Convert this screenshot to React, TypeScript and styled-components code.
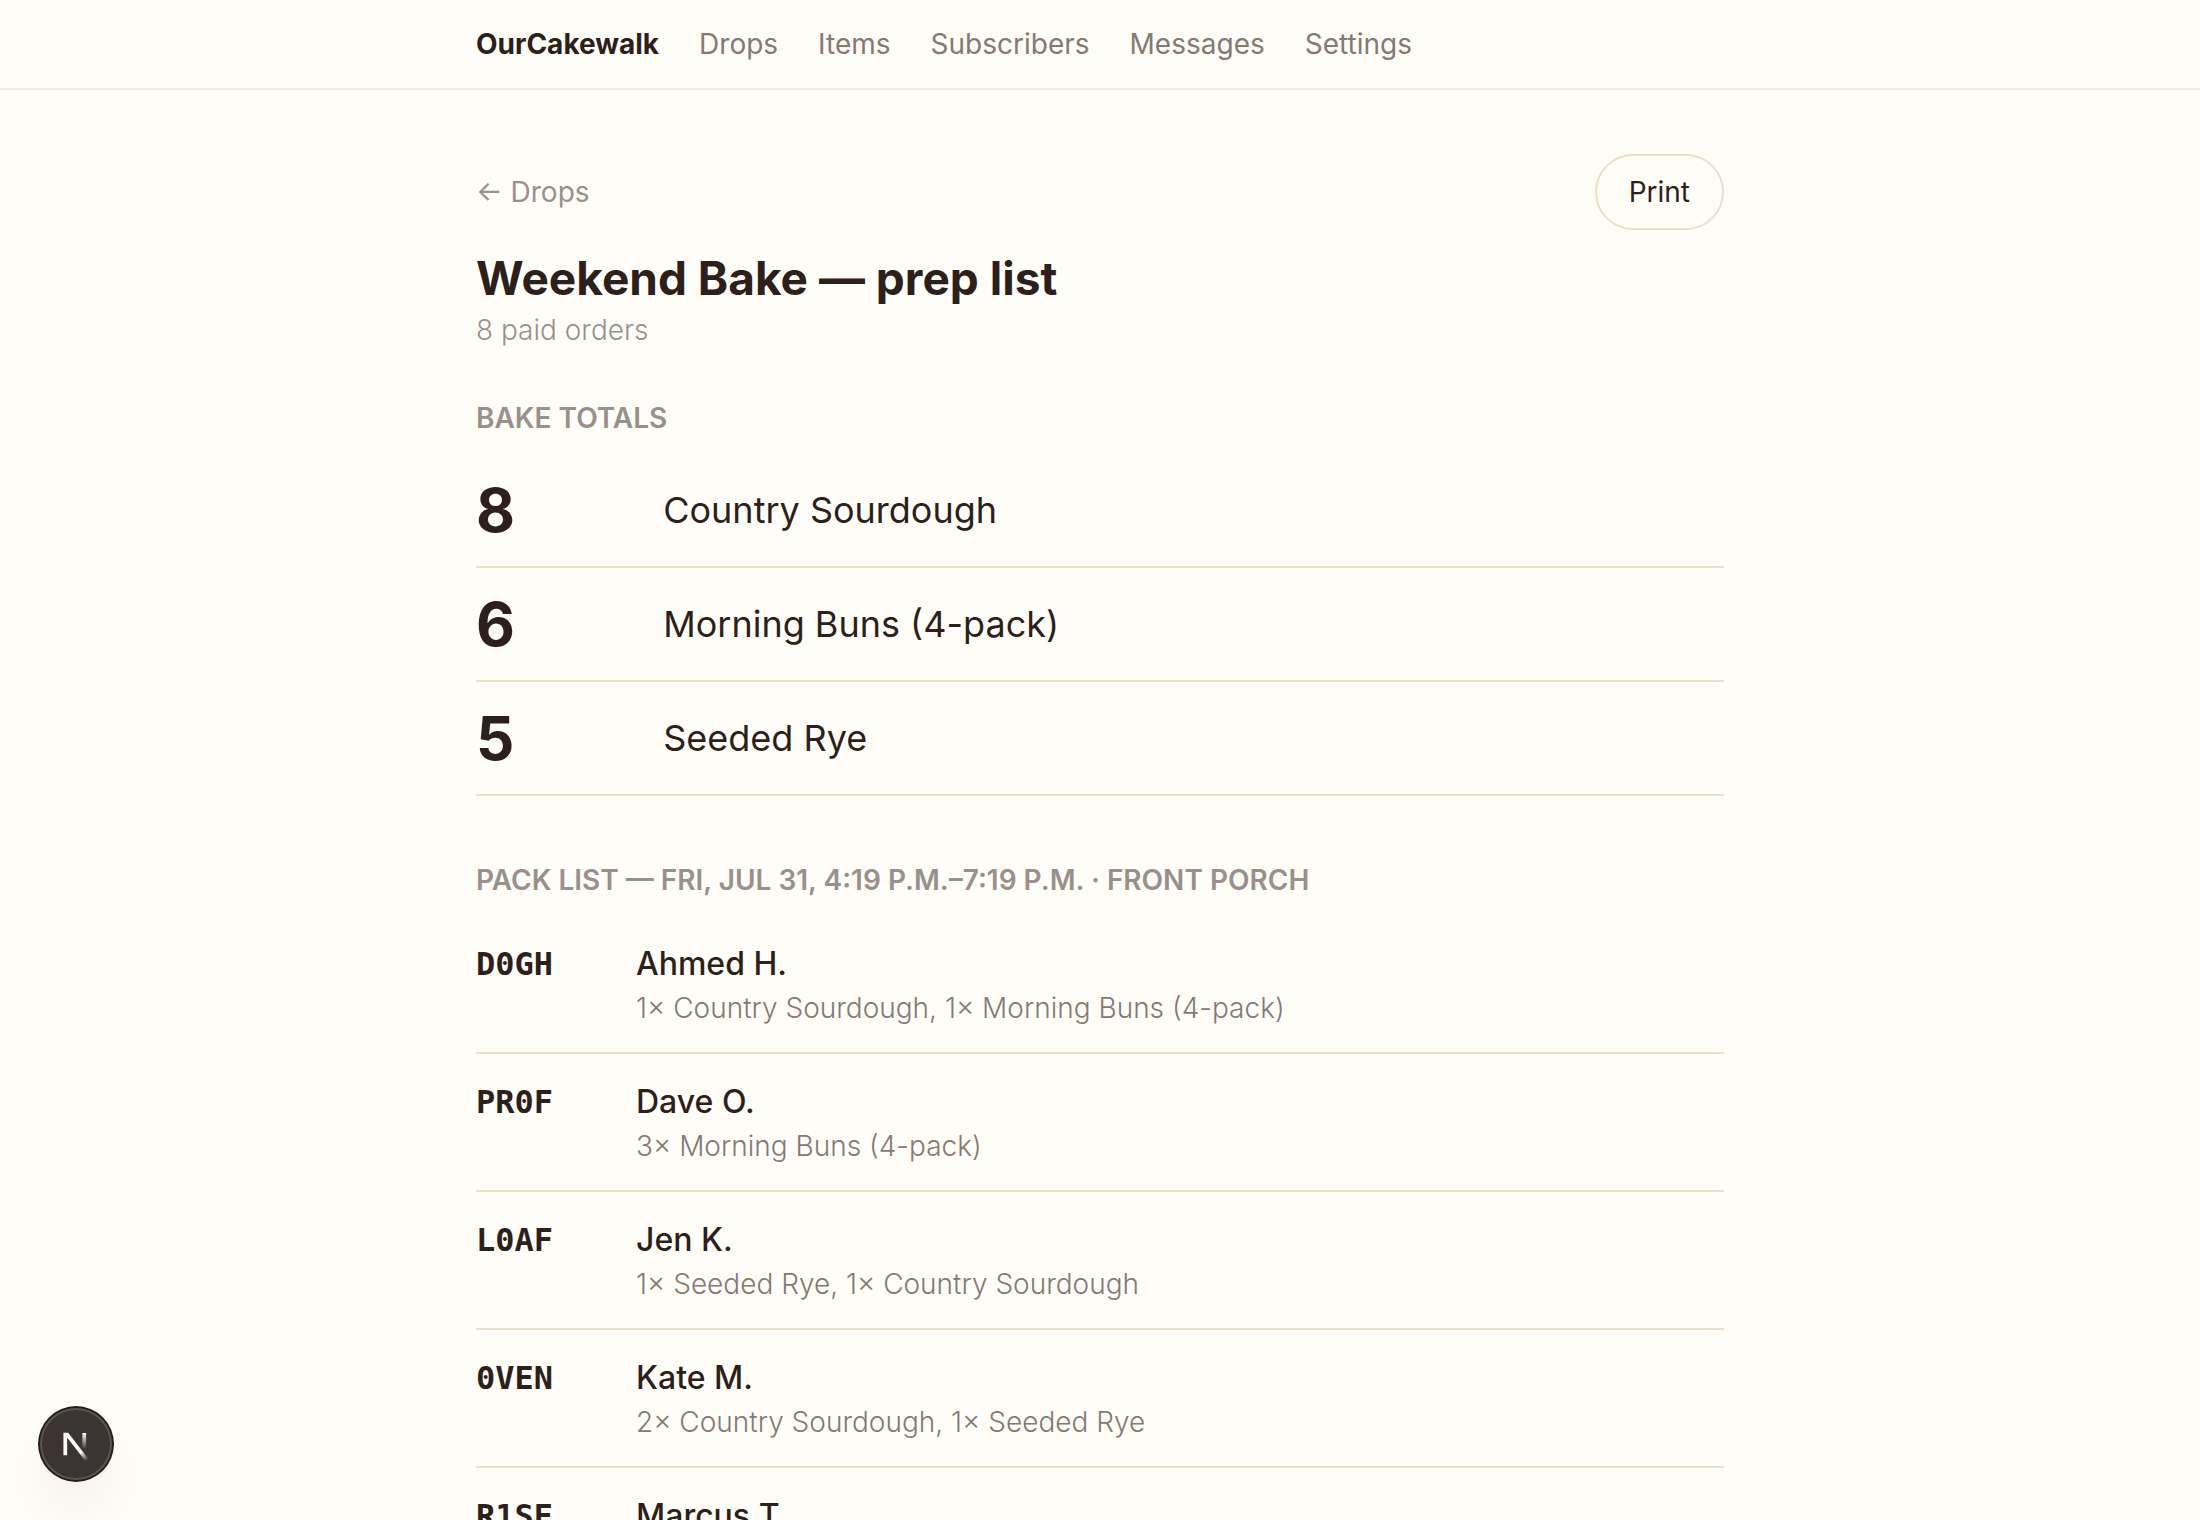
import React from "react";
import styled, { createGlobalStyle } from "styled-components";

const color = {
  paper: "#fffdf8",
  ink: "#2d1f1a",
  muted: "#857973",
  faint: "#9a908b",
  line: "#ebdfcb",
  softLine: "#f1ebe3",
};

const GlobalStyle = createGlobalStyle`
  *, *::before, *::after { box-sizing: border-box; }
  body {
    margin: 0;
    background: ${color.paper};
    color: ${color.ink};
    font-family: Inter, "Liberation Sans", sans-serif;
    font-size: 28px;
    line-height: 40px;
    -webkit-font-smoothing: antialiased;
  }
`;

const Header = styled.header`
  border-bottom: 2px solid ${color.softLine};
`;

const Nav = styled.nav`
  display: flex;
  align-items: center;
  gap: 40px;
  max-width: 1344px;
  margin: 0 auto;
  padding: 24px 48px;
`;

const Brand = styled.a`
  color: ${color.ink};
  font-weight: 700;
  text-decoration: none;
`;

const NavLink = styled.a`
  color: ${color.muted};
  font-weight: 400;
  text-decoration: none;
`;

const Main = styled.main`
  max-width: 1344px;
  margin: 0 auto;
  padding: 64px 48px 0;
`;

const Toolbar = styled.div`
  display: flex;
  align-items: center;
  justify-content: space-between;
  margin-bottom: 16px;
`;

const BackLink = styled.a`
  color: ${color.faint};
  font-weight: 400;
  text-decoration: none;
`;

const PrintButton = styled.button`
  padding: 16px 32px;
  border: 2px solid ${color.line};
  border-radius: 40px;
  background: transparent;
  color: ${color.ink};
  font: inherit;
  cursor: pointer;
`;

const Title = styled.h1`
  margin: 0;
  font-size: 46px;
  line-height: 64px;
  font-weight: 700;
`;

const Subtitle = styled.p`
  margin: 0;
  color: ${color.faint};
  font-weight: 300;
`;

const Section = styled.section<{ $gap: number }>`
  margin-top: ${(p) => p.$gap}px;
`;

const SectionTitle = styled.h2`
  margin: 0 0 16px;
  color: ${color.faint};
  font-size: 28px;
  line-height: 40px;
  font-weight: 600;
  text-transform: uppercase;
`;

const Table = styled.table`
  width: 100%;
  border-collapse: separate;
  border-spacing: 0;
  table-layout: fixed;
`;

const Cell = styled.td`
  padding: 20px 0;
  border-bottom: 2px solid ${color.line};
  font-size: 36px;
  line-height: 56px;
  vertical-align: middle;
`;

const CountCell = styled.th`
  width: 15%;
  padding: 20px 0;
  border-bottom: 2px solid ${color.line};
  font-size: 60px;
  line-height: 72px;
  font-weight: 700;
  text-align: left;
`;

const List = styled.ul`
  margin: 0;
  padding: 0;
  list-style: none;
`;

const Order = styled.li`
  display: grid;
  grid-template-columns: 160px 1fr;
  padding: 24px 0;
  border-bottom: 2px solid ${color.line};
`;

const Code = styled.span`
  font-family: "DejaVu Sans Mono", monospace;
  font-size: 32px;
  line-height: 48px;
  font-weight: 700;
`;

const Customer = styled.div`
  font-size: 32px;
  line-height: 48px;
  font-weight: 500;
`;

const Lines = styled.div`
  min-height: 40px;
  color: ${color.muted};
  font-weight: 300;
`;

const DevBadge = styled.button`
  position: fixed;
  left: 40px;
  bottom: 40px;
  width: 72px;
  height: 72px;
  padding: 0;
  border: 0;
  border-radius: 50%;
  background: #3a3532;
  box-shadow:
    0 0 0 2px #2a1c18,
    inset 0 0 0 2px #5c534e,
    0 32px 64px -16px rgba(45, 31, 26, 0.16);
  cursor: pointer;

  svg { display: block; }
`;

const links = ["Drops", "Items", "Subscribers", "Messages", "Settings"];

const totals = [
  { count: 8, item: "Country Sourdough" },
  { count: 6, item: "Morning Buns (4-pack)" },
  { count: 5, item: "Seeded Rye" },
];

const orders = [
  { code: "D0GH", name: "Ahmed H.", lines: "1× Country Sourdough, 1× Morning Buns (4-pack)" },
  { code: "PR0F", name: "Dave O.", lines: "3× Morning Buns (4-pack)" },
  { code: "L0AF", name: "Jen K.", lines: "1× Seeded Rye, 1× Country Sourdough" },
  { code: "0VEN", name: "Kate M.", lines: "2× Country Sourdough, 1× Seeded Rye" },
  { code: "R1SE", name: "Marcus T.", lines: "" },
];

function NextMark() {
  return (
    <svg width="72" height="72" viewBox="0 0 36 36" fill="none" aria-hidden="true">
      <defs>
        <linearGradient id="diagonal" x1="9.95" y1="11.12" x2="15.48" y2="17.97" gradientUnits="userSpaceOnUse">
          <stop stopColor="#fff" />
          <stop offset="0.6" stopColor="#fff" stopOpacity="0" />
        </linearGradient>
        <linearGradient id="upright" x1="11.82" y1="1.4" x2="11.79" y2="9.63" gradientUnits="userSpaceOnUse">
          <stop stopColor="#fff" />
          <stop offset="1" stopColor="#fff" stopOpacity="0" />
        </linearGradient>
        <clipPath id="trim">
          <rect x="0" y="1.4" width="18" height="16" />
        </clipPath>
      </defs>
      <g transform="translate(10.3 11)" strokeWidth="1.86" clipPath="url(#trim)">
        <path d="M13.3 15.2 L2.34 1 V12.6" stroke="url(#diagonal)" />
        <path d="M11.825 1.5 V13.1" stroke="url(#upright)" />
      </g>
    </svg>
  );
}

export default function App() {
  return (
    <>
      <GlobalStyle />
      <Header>
        <Nav aria-label="Main">
          <Brand href="#">OurCakewalk</Brand>
          {links.map((label) => (
            <NavLink key={label} href="#">{label}</NavLink>
          ))}
        </Nav>
      </Header>
      <Main>
        <Toolbar>
          <BackLink href="#">← Drops</BackLink>
          <PrintButton type="button">Print</PrintButton>
        </Toolbar>
        <Title>Weekend Bake — prep list</Title>
        <Subtitle>8 paid orders</Subtitle>
        <Section $gap={48}>
          <SectionTitle>Bake totals</SectionTitle>
          <Table>
            <tbody>
              {totals.map((t) => (
                <tr key={t.item}>
                  <CountCell scope="row">{t.count}</CountCell>
                  <Cell>{t.item}</Cell>
                </tr>
              ))}
            </tbody>
          </Table>
        </Section>
        <Section $gap={64}>
          <SectionTitle>Pack list — Fri, Jul 31, 4:19 p.m.–7:19 p.m. · Front porch</SectionTitle>
          <List>
            {orders.map((o) => (
              <Order key={o.code}>
                <Code>{o.code}</Code>
                <div>
                  <Customer>{o.name}</Customer>
                  <Lines>{o.lines}</Lines>
                </div>
              </Order>
            ))}
          </List>
        </Section>
      </Main>
      <DevBadge type="button" aria-label="Open Next.js Dev Tools">
        <NextMark />
      </DevBadge>
    </>
  );
}
